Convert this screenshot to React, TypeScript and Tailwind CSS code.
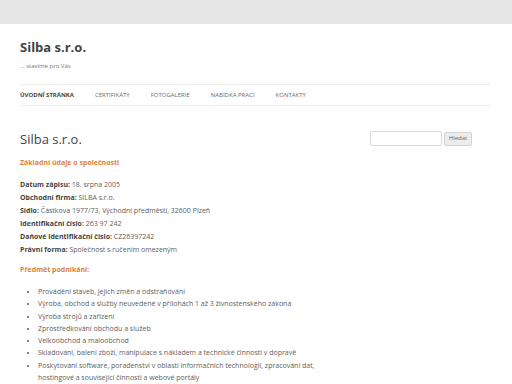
const navItems = ["Úvodní stránka", "Certifikáty", "Fotogalerie", "Nabídka prací", "Kontakty"];

const companyData = [
  { label: "Datum zápisu:", value: "18. srpna 2005" },
  { label: "Obchodní firma:", value: "SILBA s.r.o." },
  { label: "Sídlo:", value: "Částkova 1977/73, Východní předměstí, 32600 Plzeň" },
  { label: "Identifikační číslo:", value: "263 97 242" },
  { label: "Daňové identifikační číslo:", value: "CZ26397242" },
  { label: "Právní forma:", value: "Společnost s ručením omezeným" },
];

const activities = [
  "Provádění staveb, jejich změn a odstraňování",
  "Výroba, obchod a služby neuvedené v přílohách 1 až 3 živnostenského zákona",
  "Výroba strojů a zařízení",
  "Zprostředkování obchodu a služeb",
  "Velkoobchod a maloobchod",
  "Skladování, balení zboží, manipulace s nákladem a technické činnosti v dopravě",
  "Poskytování software, poradenství v oblasti informačních technologií, zpracování dat, hostingové a související činnosti a webové portály",
];

export default function App() {
  return (
    <div className="min-h-[384px] bg-white font-['Open_Sans',sans-serif] text-[#444]">
      <div className="h-[24px] bg-[#e6e6e6]" />

      <div className="pl-[20px] pr-[22px]">
        <header>
          <h2 className="mt-[14px] text-[13px] leading-[18px] font-bold text-[#444]">Silba s.r.o.</h2>
          <p className="mt-[5px] text-[6px] leading-[10px] text-[#757575]">… stavíme pro Vás</p>

          <nav className="mt-[13px] h-[22px] border-y border-[#ededed] flex items-center gap-[21px] text-[6px] uppercase text-[#6a6a6a]">
            {navItems.map((item, i) => (
              <span key={item} className={i === 0 ? "font-bold text-[#444]" : ""}>
                {item}
              </span>
            ))}
          </nav>
        </header>

        <div className="flex justify-between">
          <main className="w-[306px]">
            <h1 className="mt-[24px] text-[13px] leading-[18px] font-normal text-[#444]">Silba s.r.o.</h1>

            <p className="mt-[8px] text-[7px] leading-[13px] font-bold text-[#e0803c]">Základní údaje o společnosti</p>

            <div className="mt-[9px] text-[7px] leading-[13px] text-[#5e5e5e]">
              {companyData.map((row) => (
                <p key={row.label}>
                  <span className="font-bold text-[#444]">{row.label}</span> {row.value}
                </p>
              ))}
            </div>

            <p className="mt-[7px] text-[7px] leading-[13px] font-bold text-[#e0803c]">Předmět podnikání:</p>

            <ul className="mt-[10px] pl-[18px] list-disc text-[7px] leading-[12.3px] text-[#5e5e5e]">
              {activities.map((a) => (
                <li key={a}>{a}</li>
              ))}
            </ul>
          </main>

          <aside className="w-[120px] mt-[25px]">
            <div className="flex items-center gap-[2px]">
              <input
                type="text"
                className="w-[72px] h-[15px] border border-[#d9d9d9] rounded-[2px] bg-white"
              />
              <button className="w-[28px] h-[14px] border border-[#d2d2d2] rounded-[2px] bg-[#ececec] text-[6px] text-[#6a6a6a]">
                Hledat
              </button>
            </div>
          </aside>
        </div>
      </div>
    </div>
  );
}
